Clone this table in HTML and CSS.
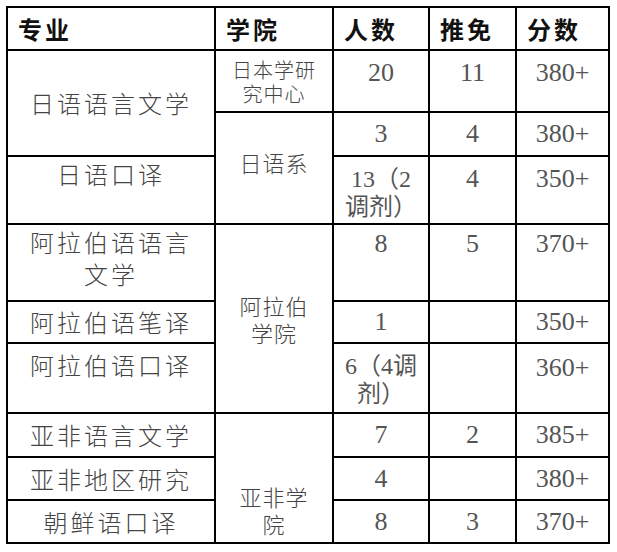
FILE: index.html
```html
<!DOCTYPE html>
<html lang="zh">
<head>
<meta charset="utf-8">
<title>招生统计</title>
<link rel="stylesheet" href="styles.css">
</head>
<body>
<table class="grid">
  <colgroup>
    <col class="c1"><col class="c2"><col class="c3"><col class="c4"><col class="c5">
  </colgroup>
  <tr class="rh">
    <th>专业</th><th>学院</th><th>人数</th><th>推免</th><th>分数</th>
  </tr>
  <tr class="r1">
    <td rowspan="2" class="major mid">日语语言文学</td>
    <td class="school small">日本学研<br>究中心</td>
    <td class="num">20</td><td class="num">11</td><td class="num">380+</td>
  </tr>
  <tr class="r2">
    <td rowspan="2" class="school mid up">日语系</td>
    <td class="num mid">3</td><td class="num mid">4</td><td class="num mid">380+</td>
  </tr>
  <tr class="r3">
    <td class="major">日语口译</td>
    <td class="num mix">13（2<br>调剂）</td><td class="num">4</td><td class="num">350+</td>
  </tr>
  <tr class="r4">
    <td class="major two">阿拉伯语语言<br>文学</td>
    <td rowspan="3" class="school mid">阿拉伯<br>学院</td>
    <td class="num">8</td><td class="num">5</td><td class="num">370+</td>
  </tr>
  <tr class="r5">
    <td class="major mid">阿拉伯语笔译</td>
    <td class="num mid">1</td><td class="num"></td><td class="num mid">350+</td>
  </tr>
  <tr class="r6">
    <td class="major low">阿拉伯语口译</td>
    <td class="num mix">6（4调<br>剂）</td><td class="num"></td><td class="num">360+</td>
  </tr>
  <tr class="r7">
    <td class="major mid">亚非语言文学</td>
    <td rowspan="3" class="school bot">亚非学<br>院</td>
    <td class="num mid">7</td><td class="num mid">2</td><td class="num mid">385+</td>
  </tr>
  <tr class="r8">
    <td class="major mid">亚非地区研究</td>
    <td class="num mid">4</td><td class="num"></td><td class="num mid">380+</td>
  </tr>
  <tr class="r9">
    <td class="major mid">朝鲜语口译</td>
    <td class="num mid">8</td><td class="num mid">3</td><td class="num mid">370+</td>
  </tr>
</table>
</body>
</html>
```

FILE: styles.css
```css
html, body {
  margin: 0;
  padding: 0;
  background: #fff;
}

body {
  padding: 6px 0 0 6px;
}

.grid {
  border-collapse: collapse;
  table-layout: fixed;
  width: 604px;
  font-family: "Noto Sans CJK SC", sans-serif;
}

.c1 { width: 208px; }
.c2 { width: 118px; }
.c3 { width: 96px; }
.c4 { width: 87px; }
.c5 { width: 93px; }

.grid th,
.grid td {
  border: 2px solid #000;
  padding: 0;
  vertical-align: top;
}

.grid th {
  text-align: left;
  font-weight: 700;
  font-size: 24px;
  letter-spacing: 3px;
  line-height: 30px;
  color: #111;
  padding-left: 10px;
  vertical-align: middle;
}

.rh { height: 43px; }
.r1 { height: 62px; }
.r2 { height: 44px; }
.r3 { height: 68px; }
.r4 { height: 77px; }
.r5 { height: 42px; }
.r6 { height: 70px; }
.r7 { height: 44px; }
.r8 { height: 43px; }
.r9 { height: 43px; }

.grid td.major {
  text-align: center;
  font-size: 24px;
  font-weight: 300;
  letter-spacing: 3px;
  line-height: 30px;
  color: #444;
  padding-top: 2px;
}

.grid td.major.low {
  padding-top: 6px;
}

.grid td.two {
  line-height: 32px;
  padding-top: 1px;
}

.grid td.school {
  text-align: center;
  font-size: 22px;
  font-weight: 300;
  letter-spacing: 1px;
  line-height: 27px;
  color: #444;
}

.grid td.school.small {
  font-size: 20px;
  line-height: 24px;
  padding-top: 7px;
}

.grid td.num {
  text-align: center;
  font-family: "Liberation Serif", "Noto Sans CJK SC", serif;
  font-size: 26px;
  line-height: 30px;
  color: #555;
  padding-top: 7px;
}

.grid .r4 td.num {
  padding-top: 4px;
}

.grid .r6 td.num {
  padding-top: 9px;
}

.grid td.num.mix {
  font-size: 24px;
  line-height: 28px;
  padding-top: 8px;
}

.grid td.mid {
  vertical-align: middle;
  padding-top: 0;
}

.grid td.up {
  padding-bottom: 12px;
}

.grid td.bot {
  vertical-align: bottom;
  padding-top: 0;
  padding-bottom: 5px;
}
```
